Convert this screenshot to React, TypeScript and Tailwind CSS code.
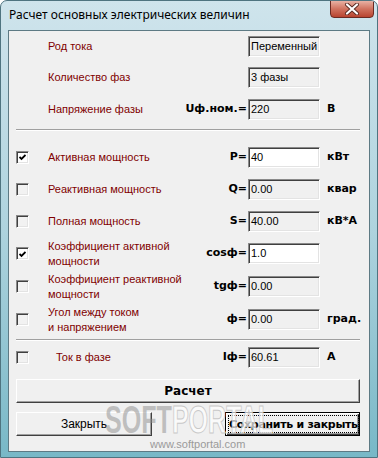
import React from "react";

const sans = "font-['Liberation_Sans',Arial,sans-serif]";
const bold = "font-['DejaVu_Sans',Verdana,sans-serif] font-bold";

function Field({ value, white }: { value: string; white?: boolean }) {
  return (
    <div
      className={`w-[72px] h-[21px] border border-t-[#8a8a8a] border-l-[#8a8a8a] border-b-white border-r-white shadow-[inset_1px_1px_0_#404040,inset_-1px_-1px_0_#e3e3e3] pl-[2px] pt-[3px] text-[11px] leading-[13px] text-black ${sans} ${
        white ? "bg-white" : "bg-[#f0f0f0]"
      }`}
    >
      {value}
    </div>
  );
}

function Check({ checked }: { checked?: boolean }) {
  return (
    <div
      className={`w-[13px] h-[13px] border border-t-[#8a8a8a] border-l-[#8a8a8a] border-b-white border-r-white shadow-[inset_1px_1px_0_#404040,inset_-1px_-1px_0_#e3e3e3] flex items-center justify-center ${
        checked ? "bg-white" : "bg-[#f2f2f2]"
      }`}
    >
      {checked && (
        <svg width="7" height="7" viewBox="0 0 7 7" className="mt-[1px]">
          <polyline points="0.5,3 2.5,5 6.5,1" fill="none" stroke="#000" strokeWidth="1.8" />
        </svg>
      )}
    </div>
  );
}

interface RowProps {
  h: string;
  check?: "on" | "off";
  label: React.ReactNode;
  labelPad?: boolean;
  sym?: string;
  value: string;
  white?: boolean;
  unit?: string;
}

function Row({ h, check, label, labelPad, sym, value, white, unit }: RowProps) {
  return (
    <div className={`flex items-center ${h}`}>
      <div className="w-[39px] pl-[7px] flex items-center">
        {check && <Check checked={check === "on"} />}
      </div>
      <div
        className={`w-[140px] text-[11px] leading-[15px] text-[#800000] ${sans} ${labelPad ? "pl-[8px]" : ""}`}
      >
        {label}
      </div>
      <div className={`w-[60px] flex justify-end pr-[1px] text-[11px] text-black whitespace-nowrap ${bold}`}>
        {sym}
      </div>
      <Field value={value} white={white} />
      <div className={`pl-[7px] text-[11px] text-black ${bold}`}>{unit}</div>
    </div>
  );
}

function Separator({ className }: { className: string }) {
  return <div className={`ml-[7px] mr-[9px] h-[2px] border-t border-t-[#a0a0a0] border-b border-b-white ${className}`} />;
}

export default function App() {
  return (
    <div className="w-[378px] h-[458px] relative flex flex-col rounded-t-[7px] border border-[#4f7480] bg-linear-to-b from-[#cfe4ec] via-[#aed3de] to-[#78b8c7] overflow-hidden">
      {/* title bar */}
      <div className="h-[29px] flex items-center pl-[8px] pb-[2px]">
        <span className="text-[12px] text-black font-['Noto_Sans','Liberation_Sans',sans-serif]">
          Расчет основных электрических величин
        </span>
      </div>
      <div className="absolute top-[-1px] right-[3px] w-[44px] h-[18px] rounded-b-[4px] border border-[#6b2a22] bg-linear-to-b from-[#e8b1a4] via-[#d0725f] to-[#b8432f] flex items-center justify-center">
        <svg width="16" height="12" viewBox="0 0 16 12">
          <path d="M3 1.5 L13 10.5 M13 1.5 L3 10.5" stroke="#5a2a22" strokeWidth="4" strokeLinecap="round" />
          <path d="M3 1.5 L13 10.5 M13 1.5 L3 10.5" stroke="#fff" strokeWidth="2.2" strokeLinecap="round" />
        </svg>
      </div>

      {/* client area */}
      <div className="mx-[7px] mb-[5px] flex-1 border border-[#5d7a84] bg-[#f0f0f0] flex flex-col">
        <Row h="h-[30px]" label="Род тока" value="Переменный" />
        <Row h="h-[32px]" label="Количество фаз" value="3 фазы" />
        <Row h="h-[32px]" label="Напряжение фазы" sym="Uф.ном.=" value="220" unit="В" />
        <Separator className="mt-[4px]" />
        <div className="h-[10px]" />
        <Row h="h-[32px]" check="on" label="Активная мощность" sym="P=" value="40" white unit="кВт" />
        <Row h="h-[32px]" check="off" label="Реактивная мощность" sym="Q=" value="0.00" unit="квар" />
        <Row h="h-[32px]" check="off" label="Полная мощность" sym="S=" value="40.00" unit="кВ*А" />
        <Row
          h="h-[33px]"
          check="on"
          label={
            <>
              Коэффициент активной
              <br />
              мощности
            </>
          }
          sym="cosф="
          value="1.0"
          white
        />
        <Row
          h="h-[33px]"
          check="off"
          label={
            <>
              Коэффициент реактивной
              <br />
              мощности
            </>
          }
          sym="tgф="
          value="0.00"
        />
        <Row
          h="h-[33px]"
          check="off"
          label={
            <>
              Угол между током
              <br />
              и напряжением
            </>
          }
          sym="ф="
          value="0.00"
          unit="град."
        />
        <Separator className="mt-[3px]" />
        <Row h="h-[33px]" check="off" label="Ток в фазе" labelPad sym="Iф=" value="60.61" unit="А" />

        <button
          className={`ml-[7px] mt-[5px] w-[344px] h-[24px] bg-[#f0f0f0] border border-t-white border-l-white border-b-[#404040] border-r-[#404040] shadow-[inset_-1px_-1px_0_#a0a0a0] text-[12px] text-black ${bold}`}
        >
          Расчет
        </button>
        <div className="ml-[7px] mt-[9px] w-[344px] flex">
          <button
            className={`w-[136px] h-[24px] bg-[#f0f0f0] border border-t-white border-l-white border-b-[#404040] border-r-[#404040] shadow-[inset_-1px_-1px_0_#a0a0a0] text-[12px] text-black ${sans}`}
          >
            Закрыть
          </button>
          <button
            className={`ml-auto w-[135px] h-[24px] bg-[#f0f0f0] border border-black shadow-[inset_1px_1px_0_#fff,inset_-1px_-1px_0_#404040,inset_-2px_-2px_0_#a0a0a0] p-[2px] flex text-[11px] text-black ${bold}`}
          >
            <span className="flex-1 h-full border border-dotted border-black flex items-center justify-center leading-none whitespace-nowrap tracking-[-0.3px]">
              Сохранить и закрыть
            </span>
          </button>
        </div>
      </div>

      {/* watermark */}
      <div className="absolute left-[104px] top-[404px] pointer-events-none">
        <div className="flex text-[38px] leading-[30px] font-bold font-['Liberation_Sans',sans-serif] scale-x-[0.66] origin-left">
          <span className="text-[#8c8c8c]/50">SOFT</span>
          <span className="text-white/70 [-webkit-text-stroke:1px_#c8c8c8]">PORTAL</span>
        </div>
      </div>
      <div className={`absolute left-[149px] top-[438px] text-[11px] leading-[11px] text-[#9a9a9a] pointer-events-none ${sans}`}>
        www.softportal.com
      </div>
    </div>
  );
}
